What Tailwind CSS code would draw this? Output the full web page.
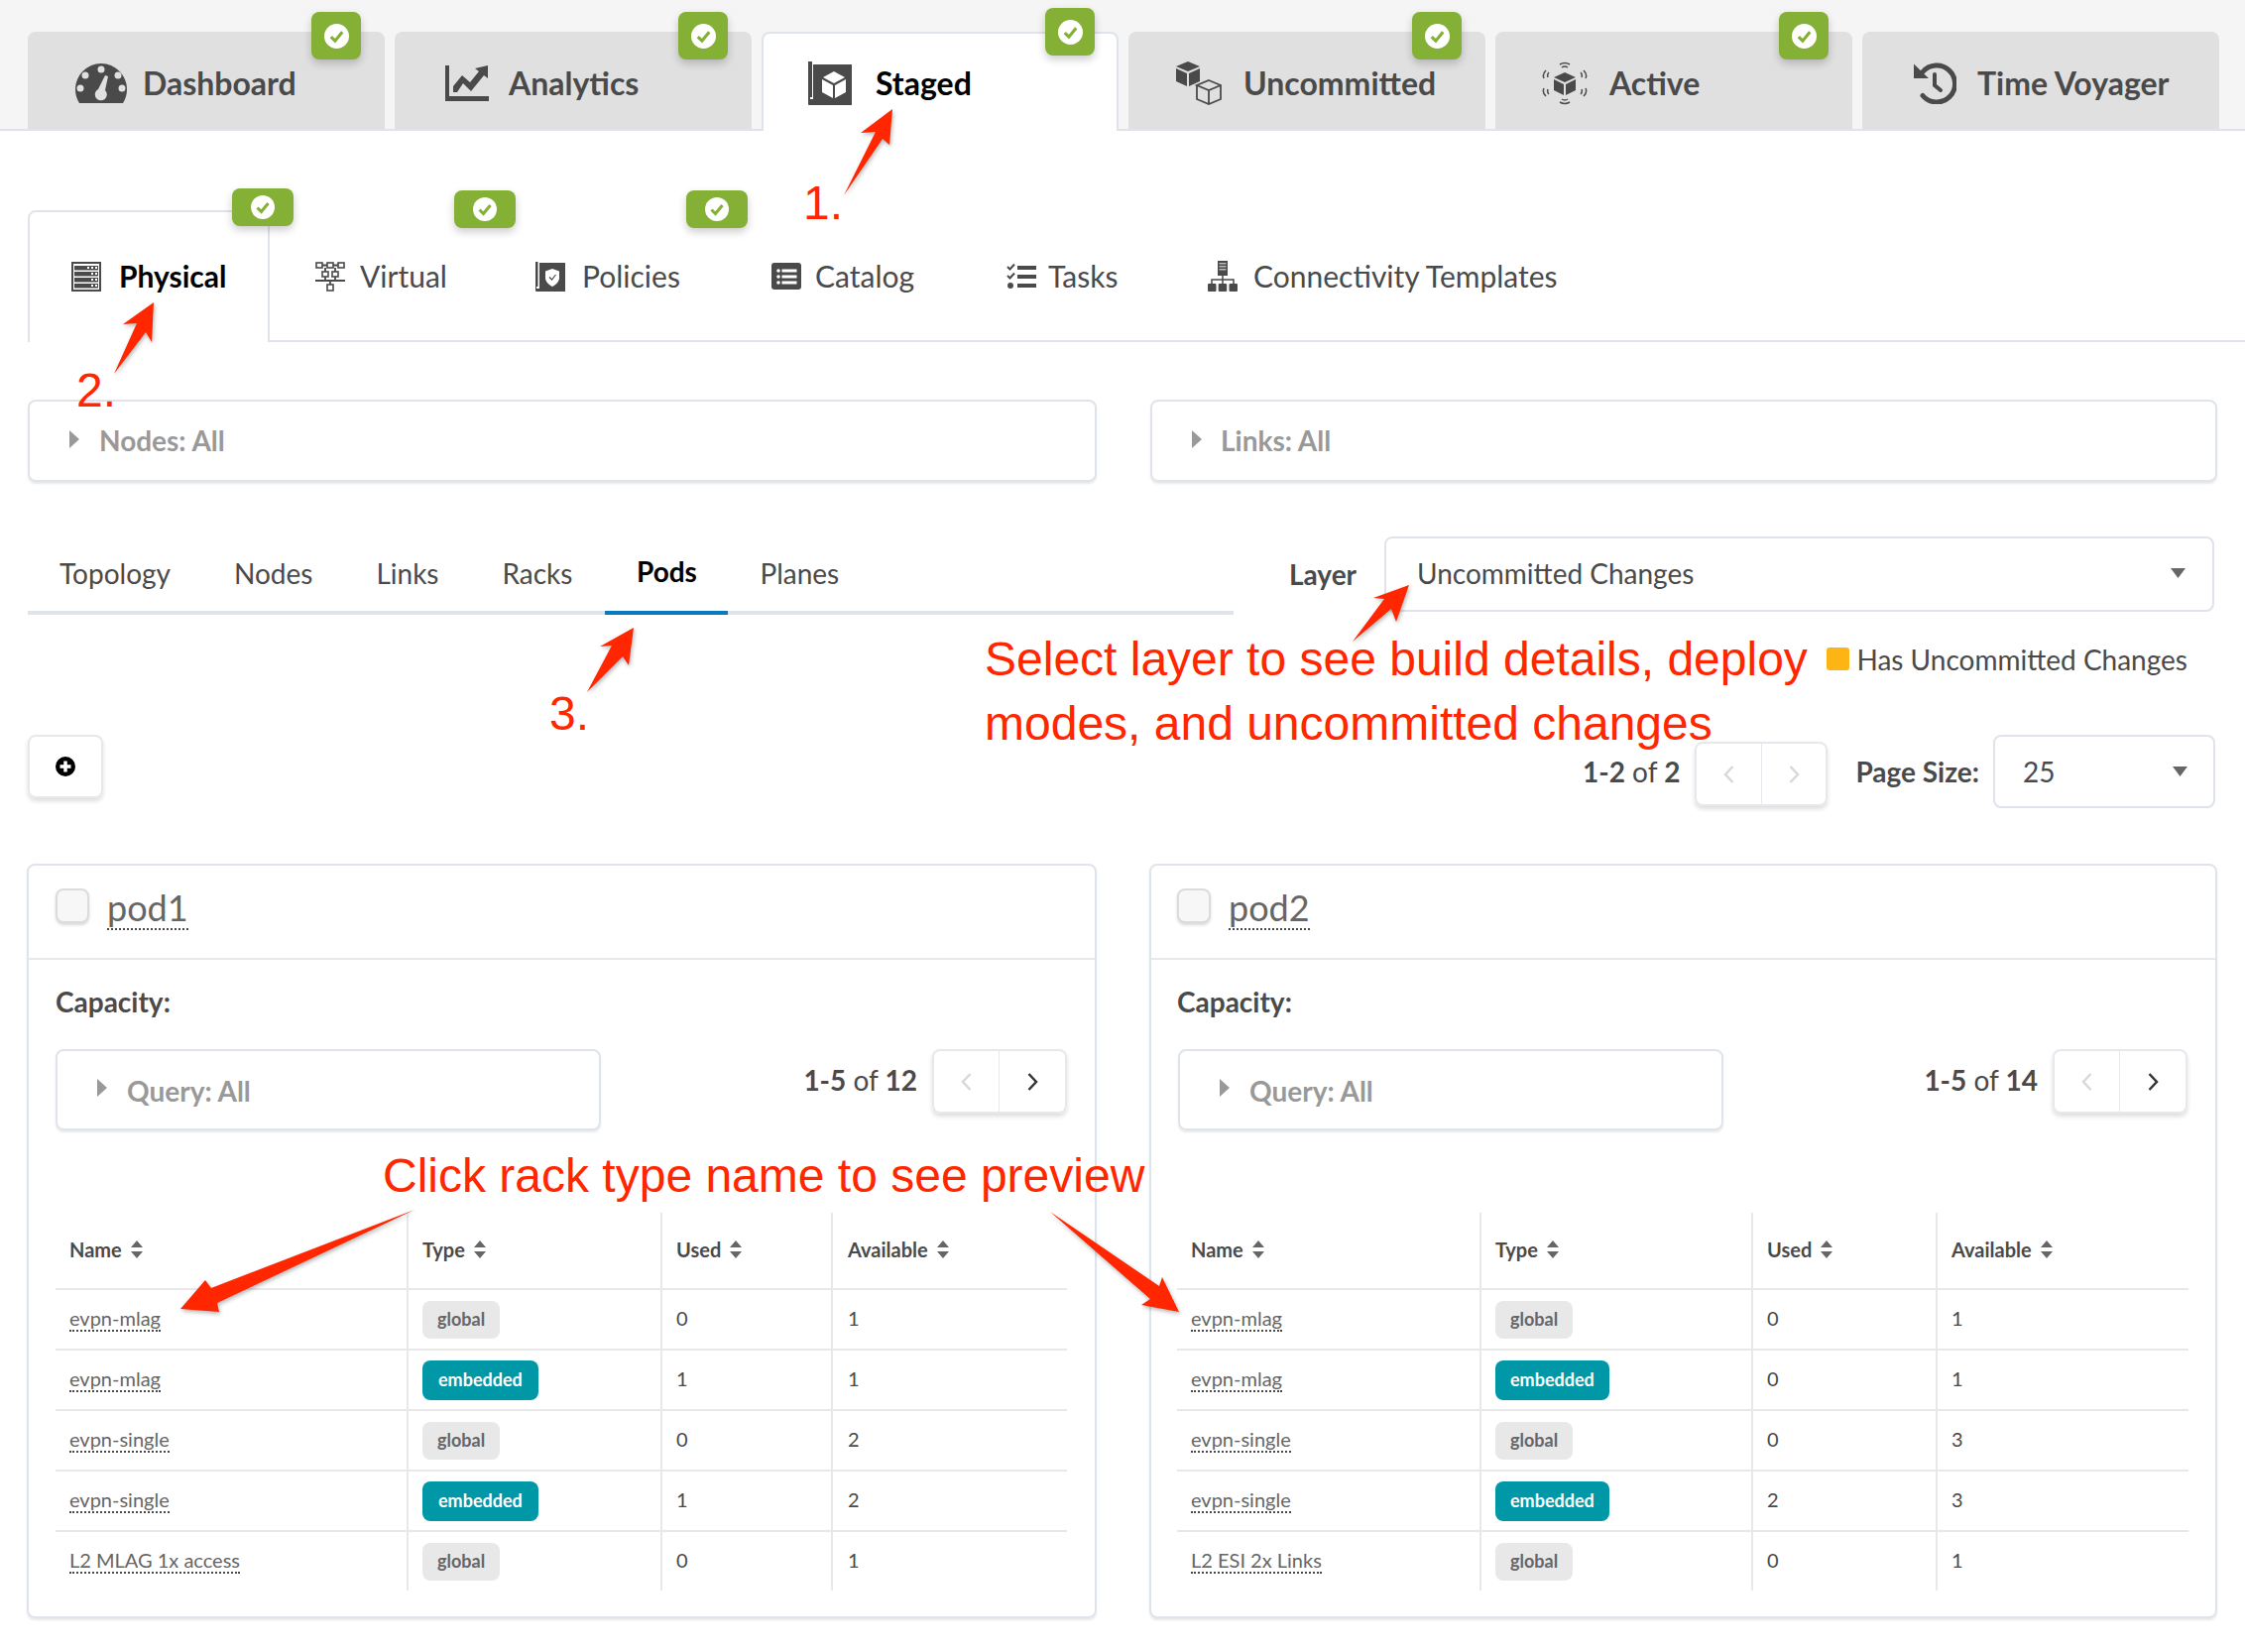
<!DOCTYPE html>
<html>
<head>
<meta charset="utf-8">
<script src="https://cdn.jsdelivr.net/npm/@tailwindcss/browser@4"></script>
</head>
<body class="relative w-[2264px] h-[1666px] overflow-hidden bg-white text-[#4a4a4a] [font-family:Lato,sans-serif]">

<!-- top nav -->
<nav class="flex h-[132px] gap-[10px] border-b-2 border-[#dfe3ea] bg-[#f5f5f5] pl-[28px] pt-[32px] text-[32px] font-bold">
  <div class="relative flex h-[98px] w-[360px] items-center gap-[16px] rounded-t-lg bg-[#e0e0e0] pt-[6px] pl-[48px]">
    <svg class="h-[40px] w-[52px]" viewBox="0 0 52 40"><path fill="#4a4a4a" d="M4 40 C1 35 0 31 0 26 C0 12 12 0 26 0 C40 0 52 12 52 26 C52 31 51 35 48 40 Z"/><g fill="#e0e0e0"><circle cx="26" cy="6" r="3.5"/><circle cx="10" cy="12" r="3.5"/><circle cx="5" cy="25" r="3.5"/><circle cx="43" cy="12" r="3.5"/><circle cx="47" cy="25" r="3.5"/><path d="M30 12 L33 13 L30 27 A6 6 0 1 1 23 26 Z"/></g></svg>
    <span>Dashboard</span>
    <span class="absolute right-[24px] top-[-20px] flex h-[48px] w-[50px] items-center justify-center rounded-lg bg-[#84b135] shadow-[0_4px_8px_rgba(0,0,0,0.2)]"><svg class="h-[25px] w-[25px]" viewBox="0 0 24 24"><circle cx="12" cy="12" r="12" fill="#fff"/><path d="M6.5 12.5 L10.5 16.5 L17.5 8" fill="none" stroke="#84b135" stroke-width="3"/></svg></span>
  </div>
  <div class="relative flex h-[98px] w-[360px] items-center gap-[20px] rounded-t-lg bg-[#e0e0e0] pt-[6px] pl-[51px]">
    <svg class="h-[36px] w-[44px]" viewBox="0 0 44 36"><path fill="#4a4a4a" d="M0 0 H4 V31 H44 V36 H0 Z"/><path fill="#4a4a4a" d="M8 27 L8 21 L17 10 L25 17 L34 6 L30 3 L43 0 L43 13 L39 10 L26 26 L18 18 L12 27 Z"/></svg>
    <span>Analytics</span>
    <span class="absolute right-[24px] top-[-20px] flex h-[48px] w-[50px] items-center justify-center rounded-lg bg-[#84b135] shadow-[0_4px_8px_rgba(0,0,0,0.2)]"><svg class="h-[25px] w-[25px]" viewBox="0 0 24 24"><circle cx="12" cy="12" r="12" fill="#fff"/><path d="M6.5 12.5 L10.5 16.5 L17.5 8" fill="none" stroke="#84b135" stroke-width="3"/></svg></span>
  </div>
  <div class="relative z-10 flex h-[100px] w-[360px] items-center gap-[24px] rounded-t-lg border-x-2 border-t-2 border-[#dfe3ea] bg-white pt-[2px] pl-[45px] text-black">
    <svg class="h-[44px] w-[44px]" viewBox="0 0 44 44"><path fill="#4a4a4a" d="M0 0 H4 V36 H2 V38 H5 V3 H43 A1 1 0 0 1 44 4 V43 A1 1 0 0 1 43 44 H1 A1 1 0 0 1 0 43 V39 H0 Z"/><path fill="#4a4a4a" d="M6 3 H44 V44 H2 V40 H6 Z"/><path fill="#fff" d="M26 10 L37 16 L26 22 L15 16 Z M14 18 L25 24 L25 37 L14 31 Z M27 24 L38 18 L38 31 L27 37 Z"/></svg>
    <span>Staged</span>
    <span class="absolute right-[22px] top-[-26px] flex h-[48px] w-[50px] items-center justify-center rounded-lg bg-[#84b135] shadow-[0_4px_8px_rgba(0,0,0,0.2)]"><svg class="h-[25px] w-[25px]" viewBox="0 0 24 24"><circle cx="12" cy="12" r="12" fill="#fff"/><path d="M6.5 12.5 L10.5 16.5 L17.5 8" fill="none" stroke="#84b135" stroke-width="3"/></svg></span>
  </div>
  <div class="relative flex h-[98px] w-[360px] items-center gap-[22px] rounded-t-lg bg-[#e0e0e0] pt-[6px] pl-[48px]">
    <svg class="h-[44px] w-[46px]" viewBox="0 0 46 44"><path fill="#4a4a4a" d="M12 0 L24 5 L12 10 L0 5 Z M0 7 L11 12 L11 25 L0 20 Z M13 12 L24 7 L24 20 L13 25 Z"/><g fill="none" stroke="#4a4a4a" stroke-width="1.8"><path d="M33 19 L45 24 L33 29 L21 24 Z M21 24 V38 L33 43 L45 38 V24 M33 29 V43"/></g></svg>
    <span>Uncommitted</span>
    <span class="absolute right-[24px] top-[-20px] flex h-[48px] w-[50px] items-center justify-center rounded-lg bg-[#84b135] shadow-[0_4px_8px_rgba(0,0,0,0.2)]"><svg class="h-[25px] w-[25px]" viewBox="0 0 24 24"><circle cx="12" cy="12" r="12" fill="#fff"/><path d="M6.5 12.5 L10.5 16.5 L17.5 8" fill="none" stroke="#84b135" stroke-width="3"/></svg></span>
  </div>
  <div class="relative flex h-[98px] w-[360px] items-center gap-[22px] rounded-t-lg bg-[#e0e0e0] pt-[6px] pl-[47px]">
    <svg class="h-[44px] w-[46px]" viewBox="0 0 46 44"><path fill="#4a4a4a" d="M23 11 L34 16 L23 21 L12 16 Z M12 18 L22 23 L22 34 L12 29 Z M24 23 L34 18 L34 29 L24 34 Z"/><g fill="none" stroke="#4a4a4a" stroke-width="1.5"><path d="M18 3 Q23 0 28 3 M20 6 Q23 4 26 6 M18 41 Q23 44 28 41 M20 38 Q23 40 26 38 M4 9 Q0 13 2 17 M7 11 Q5 13 6 16 M42 9 Q46 13 44 17 M39 11 Q41 13 40 16 M4 35 Q0 31 2 27 M7 33 Q5 31 6 28 M42 35 Q46 31 44 27 M39 33 Q41 31 40 28"/></g></svg>
    <span>Active</span>
    <span class="absolute right-[24px] top-[-20px] flex h-[48px] w-[50px] items-center justify-center rounded-lg bg-[#84b135] shadow-[0_4px_8px_rgba(0,0,0,0.2)]"><svg class="h-[25px] w-[25px]" viewBox="0 0 24 24"><circle cx="12" cy="12" r="12" fill="#fff"/><path d="M6.5 12.5 L10.5 16.5 L17.5 8" fill="none" stroke="#84b135" stroke-width="3"/></svg></span>
  </div>
  <div class="relative flex h-[98px] w-[360px] items-center gap-[21px] rounded-t-lg bg-[#e0e0e0] pt-[6px] pl-[52px]">
    <svg class="h-[42px] w-[43px]" viewBox="0 0 43 42"><path fill="none" stroke="#4a4a4a" stroke-width="5" stroke-linecap="round" d="M9 9.5 A18.5 18.5 0 1 1 9 33.5"/><path fill="#4a4a4a" d="M0 1.5 L15 16 H0 Z"/><path fill="none" stroke="#4a4a4a" stroke-width="4" stroke-linecap="round" d="M21 12 V23 L27 28"/></svg>
    <span>Time Voyager</span>
  </div>
</nav>

<!-- secondary tabs -->
<div class="mt-[80px] flex h-[133px] pl-[28px] text-[30px]">
  <div class="relative flex h-[133px] w-[244px] items-center gap-[18px] rounded-t-lg border-x-2 border-t-2 border-[#dfe3ea] pb-[2px] pl-[42px] font-bold text-black">
    <svg class="h-[30px] w-[30px]" viewBox="0 0 30 30"><rect x="1" y="1" width="28" height="28" fill="none" stroke="#4a4a4a" stroke-width="2"/><g fill="#4a4a4a"><rect x="3" y="4" width="24" height="4.5"/><rect x="3" y="10" width="24" height="4.5"/><rect x="3" y="16" width="24" height="4.5"/><rect x="3" y="22" width="24" height="4.5"/></g><g fill="#fff"><rect x="16" y="5" width="2" height="2"/><rect x="20" y="5" width="2" height="2"/><rect x="24" y="5" width="2" height="2"/><rect x="20" y="11" width="2" height="2"/><rect x="24" y="11" width="2" height="2"/><rect x="20" y="17" width="2" height="2"/><rect x="24" y="17" width="2" height="2"/><rect x="20" y="23" width="2" height="2"/><rect x="24" y="23" width="2" height="2"/></g></svg>
    <span>Physical</span>
    <span class="absolute right-[-26px] top-[-24px] flex h-[38px] w-[62px] items-center justify-center rounded-lg bg-[#84b135] shadow-[0_4px_8px_rgba(0,0,0,0.2)]"><svg class="h-[24px] w-[24px]" viewBox="0 0 24 24"><circle cx="12" cy="12" r="12" fill="#fff"/><path d="M6.5 12.5 L10.5 16.5 L17.5 8" fill="none" stroke="#84b135" stroke-width="3"/></svg></span>
  </div>
  <div class="flex flex-1 items-center border-b-2 border-[#dfe3ea] pl-[46px] pt-[2px]">
    <div class="relative flex w-[222px] items-center gap-[15px]">
      <svg class="h-[30px] w-[30px]" viewBox="0 0 30 30"><g fill="none" stroke="#4a4a4a" stroke-width="1.6"><rect x="1" y="1" width="6" height="5"/><rect x="12" y="1" width="6" height="5"/><rect x="23" y="1" width="6" height="5"/><rect x="7" y="10" width="6" height="5"/><rect x="17" y="10" width="6" height="5"/><rect x="12" y="23" width="6" height="6"/><path d="M7 3.5 H12 M18 3.5 H23 M10 6 V10 M20 6 V10 M10 15 V19 M20 15 V19 M15 19 V23 M0 19 H30" stroke-width="1.8"/></g></svg>
      <span>Virtual</span>
      <span class="absolute left-[140px] top-[-64px] flex h-[38px] w-[62px] items-center justify-center rounded-lg bg-[#84b135] shadow-[0_4px_8px_rgba(0,0,0,0.2)]"><svg class="h-[24px] w-[24px]" viewBox="0 0 24 24"><circle cx="12" cy="12" r="12" fill="#fff"/><path d="M6.5 12.5 L10.5 16.5 L17.5 8" fill="none" stroke="#84b135" stroke-width="3"/></svg></span>
    </div>
    <div class="relative flex w-[238px] items-center gap-[17px]">
      <svg class="h-[30px] w-[30px]" viewBox="0 0 30 30"><path fill="#4a4a4a" d="M0 0 H2.5 V25 H1 V27 H4 V1 H30 V30 H1 A1 1 0 0 1 0 29 Z"/><path fill="#fff" d="M17 7 L24 9.5 V16 C24 20 21 23 17 25 C13 23 10 20 10 16 V9.5 Z"/><path fill="none" stroke="#4a4a4a" stroke-width="1.2" d="M14 15.5 L16.5 18 L20.5 13"/></svg>
      <span>Policies</span>
      <span class="absolute left-[152px] top-[-64px] flex h-[38px] w-[62px] items-center justify-center rounded-lg bg-[#84b135] shadow-[0_4px_8px_rgba(0,0,0,0.2)]"><svg class="h-[24px] w-[24px]" viewBox="0 0 24 24"><circle cx="12" cy="12" r="12" fill="#fff"/><path d="M6.5 12.5 L10.5 16.5 L17.5 8" fill="none" stroke="#84b135" stroke-width="3"/></svg></span>
    </div>
    <div class="flex w-[237px] items-center gap-[14px]">
      <svg class="h-[27px] w-[30px]" viewBox="0 0 30 27"><rect width="30" height="27" rx="3" fill="#4a4a4a"/><g fill="#fff"><circle cx="7" cy="8" r="1.8"/><circle cx="7" cy="14" r="1.8"/><circle cx="7" cy="20" r="1.8"/><rect x="10.5" y="6.5" width="15" height="3"/><rect x="10.5" y="12.5" width="15" height="3"/><rect x="10.5" y="18.5" width="15" height="3"/></g></svg>
      <span>Catalog</span>
    </div>
    <div class="flex w-[203px] items-center gap-[12px]">
      <svg class="h-[26px] w-[30px]" viewBox="0 0 30 26"><g fill="#4a4a4a"><rect x="11" y="2" width="19" height="4"/><rect x="11" y="11" width="19" height="4"/><rect x="11" y="20" width="19" height="4"/><circle cx="4" cy="22" r="3"/></g><path d="M1 3 L3.5 5.5 L8 0.5 M1 12 L3.5 14.5 L8 9.5" fill="none" stroke="#4a4a4a" stroke-width="2"/></svg>
      <span>Tasks</span>
    </div>
    <div class="flex items-center gap-[16px]">
      <svg class="h-[31px] w-[30px]" viewBox="0 0 30 31"><rect x="10" y="0" width="10" height="15" fill="#4a4a4a"/><g fill="#bbb"><rect x="11.5" y="2" width="7" height="1.5"/><rect x="11.5" y="5" width="7" height="1.5"/><rect x="11.5" y="8" width="7" height="1.5"/></g><path d="M15 15 V19 M4 23 V19 H26 V23 M15 19 V23" fill="none" stroke="#4a4a4a" stroke-width="1.5"/><g fill="#4a4a4a"><rect x="0" y="23" width="8.5" height="8" rx="1"/><rect x="10.7" y="23" width="8.5" height="8" rx="1"/><rect x="21.5" y="23" width="8.5" height="8" rx="1"/></g></svg>
      <span>Connectivity Templates</span>
    </div>
  </div>
</div>

<main class="pl-[28px] pr-[28px]">
  <!-- filters -->
  <div class="mt-[58px] grid grid-cols-[1078px_1076px] gap-x-[54px] text-[28px] font-bold text-[#999]">
    <div class="flex h-[83px] items-center gap-[20px] rounded-lg border-2 border-[#dfe3ea] pl-[40px] shadow-[0_2px_2px_rgba(34,36,38,0.1)]"><svg class="mb-[4px] h-[18px] w-[10px]" viewBox="0 0 10 18"><path d="M0 0 L10 9 L0 18 Z" fill="#999"/></svg><span class="pb-[2px]">Nodes: All</span></div>
    <div class="flex h-[83px] items-center gap-[19px] rounded-lg border-2 border-[#dfe3ea] pl-[40px] shadow-[0_2px_2px_rgba(34,36,38,0.1)]"><svg class="mb-[4px] h-[18px] w-[10px]" viewBox="0 0 10 18"><path d="M0 0 L10 9 L0 18 Z" fill="#999"/></svg><span class="pb-[2px]">Links: All</span></div>
  </div>

  <!-- view tabs and layer -->
  <div class="mt-[55px] flex h-[79px] text-[28px]">
    <div class="flex h-[79px] w-[1216px] border-b-4 border-[#dfe3ea]">
      <span class="flex h-[79px] items-center pb-[5px] pl-[32px] pr-[32px]">Topology</span>
      <span class="flex h-[79px] items-center pb-[5px] pl-[32px] pr-[32px]">Nodes</span>
      <span class="flex h-[79px] items-center pb-[5px] pl-[32px] pr-[32px]">Links</span>
      <span class="flex h-[79px] items-center pb-[5px] pl-[32px] pr-[33px]">Racks</span>
      <span class="flex h-[79px] w-[124px] items-center justify-center border-b-4 border-[#0a7abf] pb-[5px] font-bold text-black">Pods</span>
      <span class="flex h-[79px] items-center pb-[5px] pl-[32px]">Planes</span>
    </div>
    <span class="ml-[56px] w-[96px] pt-[17px] font-bold">Layer</span>
    <div class="flex h-[76px] w-[837px] items-center justify-between rounded-lg border-2 border-[#dfe3ea] pb-[2px] pl-[31px] pr-[27px]"><span>Uncommitted Changes</span><svg class="h-[10px] w-[15px]" viewBox="0 0 15 10"><path d="M0 0 H15 L7.5 10 Z" fill="#666"/></svg></div>
  </div>

  <!-- legend -->
  <div class="mt-[33px] flex h-[23px] items-center justify-end gap-[7px] pr-[30px] text-[28px]"><span class="h-[23px] w-[23px] rounded-[3px] bg-[#fdb515]"></span><span>Has Uncommitted Changes</span></div>

  <!-- controls -->
  <div class="mt-[61px] flex h-[78px] justify-between text-[28px]">
    <button class="mt-[4px] flex h-[64px] w-[76px] items-center justify-center rounded-lg border-2 border-[#e6e8ee] shadow-[0_3px_4px_rgba(34,36,38,0.15)]"><svg class="h-[20px] w-[20px]" viewBox="0 0 20 20"><circle cx="10" cy="10" r="10" fill="#000"/><path d="M10 4.5 V15.5 M4.5 10 H15.5" stroke="#fff" stroke-width="3.5"/></svg></button>
    <div class="mr-[2px] flex items-start">
      <span class="pt-[20px]"><b>1-2</b> of <b>2</b></span>
      <div class="ml-[15px] mt-[11px] flex h-[65px] w-[134px] rounded-lg border-2 border-[#e6e8ee] shadow-[0_3px_4px_rgba(34,36,38,0.15)]">
        <span class="flex w-[66px] items-center justify-center border-r border-[#e6e8ee]"><svg class="h-[18px] w-[11px]" viewBox="0 0 11 18"><path d="M9.5 1 L2 9 L9.5 17" fill="none" stroke="#d8d8d8" stroke-width="2.5"/></svg></span>
        <span class="flex flex-1 items-center justify-center"><svg class="h-[18px] w-[11px]" viewBox="0 0 11 18"><path d="M1.5 1 L9 9 L1.5 17" fill="none" stroke="#d8d8d8" stroke-width="2.5"/></svg></span>
      </div>
      <b class="ml-[28px] pt-[20px]">Page Size:</b>
      <div class="ml-[14px] mt-[4px] flex h-[74px] w-[224px] items-center justify-between rounded-lg border-2 border-[#dfe3ea] pl-[28px] pr-[26px]"><span>25</span><svg class="h-[10px] w-[15px]" viewBox="0 0 15 10"><path d="M0 0 H15 L7.5 10 Z" fill="#666"/></svg></div>
    </div>
  </div>

  <!-- cards -->
  <div class="-ml-px mt-[56px] grid grid-cols-[1079px_1077px] gap-x-[53px]">
    <section class="h-[761px] rounded-lg border-2 border-[#dfe3ea] shadow-[0_2px_2px_rgba(34,36,38,0.1)]">
      <header class="flex h-[95px] items-center gap-[18px] border-b-2 border-[#e6e8ee] pb-[7px] pl-[27px]">
        <span class="mb-[6px] h-[35px] w-[34px] rounded-lg border-2 border-[#dcdcdc] bg-[#f7f7f7] shadow-[0_2px_3px_rgba(0,0,0,0.15)]"></span>
        <span class="border-b-2 border-dotted border-[#4a4a4a] text-[36px] leading-[42px] text-[#666]">pod1</span>
      </header>
      <div class="pl-[27px] pr-[28px]">
        <p class="mt-[25px] text-[28px] font-bold leading-[34px]">Capacity:</p>
        <div class="mt-[31px] flex justify-between">
          <div class="flex h-[82px] w-[550px] items-center gap-[20px] rounded-lg border-2 border-[#dfe3ea] pl-[40px] pt-[2px] text-[28px] font-bold text-[#999] shadow-[0_2px_2px_rgba(34,36,38,0.1)]"><svg class="mb-[6px] h-[18px] w-[10px]" viewBox="0 0 10 18"><path d="M0 0 L10 9 L0 18 Z" fill="#999"/></svg><span>Query: All</span></div>
          <div class="flex h-[65px] items-center text-[28px]">
            <span class="pb-[4px]"><b>1-5</b> of <b>12</b></span>
            <div class="ml-[15px] flex h-[65px] w-[136px] rounded-lg border-2 border-[#e6e8ee] shadow-[0_3px_4px_rgba(34,36,38,0.15)]">
              <span class="flex w-[66px] items-center justify-center border-r border-[#e6e8ee]"><svg class="h-[18px] w-[11px]" viewBox="0 0 11 18"><path d="M9.5 1 L2 9 L9.5 17" fill="none" stroke="#d8d8d8" stroke-width="2.5"/></svg></span>
              <span class="flex flex-1 items-center justify-center"><svg class="h-[18px] w-[11px]" viewBox="0 0 11 18"><path d="M1.5 1 L9 9 L1.5 17" fill="none" stroke="#333" stroke-width="2.5"/></svg></span>
            </div>
          </div>
        </div>
        <table class="mt-[83px] w-[1020px] table-fixed border-collapse text-[20px] [&_td]:pb-[4px] [&_td:nth-child(2)]:pb-0 [&_th]:pb-[2px]">
          <colgroup><col class="w-[355px]"><col class="w-[256px]"><col class="w-[172px]"><col class="w-[237px]"></colgroup>
          <thead><tr class="h-[77px] border-b-2 border-[#e8e8e8] text-left font-bold">
            <th class="border-r-2 border-[#e8e8e8] pl-[14px] font-bold"><span class="flex items-center gap-[9px]">Name<svg class="h-[18px] w-[12px]" viewBox="0 0 12 18"><path d="M6 0 L12 7 H0 Z M6 18 L12 11 H0 Z" fill="#666"/></svg></span></th>
            <th class="border-r-2 border-[#e8e8e8] pl-[14px] font-bold"><span class="flex items-center gap-[9px]">Type<svg class="h-[18px] w-[12px]" viewBox="0 0 12 18"><path d="M6 0 L12 7 H0 Z M6 18 L12 11 H0 Z" fill="#666"/></svg></span></th>
            <th class="border-r-2 border-[#e8e8e8] pl-[14px] font-bold"><span class="flex items-center gap-[9px]">Used<svg class="h-[18px] w-[12px]" viewBox="0 0 12 18"><path d="M6 0 L12 7 H0 Z M6 18 L12 11 H0 Z" fill="#666"/></svg></span></th>
            <th class="pl-[15px] font-bold"><span class="flex items-center gap-[9px]">Available<svg class="h-[18px] w-[12px]" viewBox="0 0 12 18"><path d="M6 0 L12 7 H0 Z M6 18 L12 11 H0 Z" fill="#666"/></svg></span></th>
          </tr></thead>
          <tbody>
            <tr class="h-[61px] border-b-2 border-[#e8e8e8]"><td class="border-r-2 border-[#e8e8e8] pl-[14px]"><span class="border-b-2 border-dotted border-[#4a4a4a] text-[#666]">evpn-mlag</span></td><td class="border-r-2 border-[#e8e8e8] pl-[14px]"><span class="inline-flex h-[38px] items-center rounded-lg bg-[#e8e8e8] px-[15px] text-[18px] font-bold text-[#666]">global</span></td><td class="border-r-2 border-[#e8e8e8] pl-[14px]">0</td><td class="pl-[15px]">1</td></tr>
            <tr class="h-[61px] border-b-2 border-[#e8e8e8]"><td class="border-r-2 border-[#e8e8e8] pl-[14px]"><span class="border-b-2 border-dotted border-[#4a4a4a] text-[#666]">evpn-mlag</span></td><td class="border-r-2 border-[#e8e8e8] pl-[14px]"><span class="inline-flex h-[40px] items-center rounded-lg bg-[#0097a7] px-[16px] text-[18px] font-bold text-white">embedded</span></td><td class="border-r-2 border-[#e8e8e8] pl-[14px]">1</td><td class="pl-[15px]">1</td></tr>
            <tr class="h-[61px] border-b-2 border-[#e8e8e8]"><td class="border-r-2 border-[#e8e8e8] pl-[14px]"><span class="border-b-2 border-dotted border-[#4a4a4a] text-[#666]">evpn-single</span></td><td class="border-r-2 border-[#e8e8e8] pl-[14px]"><span class="inline-flex h-[38px] items-center rounded-lg bg-[#e8e8e8] px-[15px] text-[18px] font-bold text-[#666]">global</span></td><td class="border-r-2 border-[#e8e8e8] pl-[14px]">0</td><td class="pl-[15px]">2</td></tr>
            <tr class="h-[61px] border-b-2 border-[#e8e8e8]"><td class="border-r-2 border-[#e8e8e8] pl-[14px]"><span class="border-b-2 border-dotted border-[#4a4a4a] text-[#666]">evpn-single</span></td><td class="border-r-2 border-[#e8e8e8] pl-[14px]"><span class="inline-flex h-[40px] items-center rounded-lg bg-[#0097a7] px-[16px] text-[18px] font-bold text-white">embedded</span></td><td class="border-r-2 border-[#e8e8e8] pl-[14px]">1</td><td class="pl-[15px]">2</td></tr>
            <tr class="h-[60px]"><td class="border-r-2 border-[#e8e8e8] pl-[14px]"><span class="border-b-2 border-dotted border-[#4a4a4a] text-[#666]">L2 MLAG 1x access</span></td><td class="border-r-2 border-[#e8e8e8] pl-[14px]"><span class="inline-flex h-[38px] items-center rounded-lg bg-[#e8e8e8] px-[15px] text-[18px] font-bold text-[#666]">global</span></td><td class="border-r-2 border-[#e8e8e8] pl-[14px]">0</td><td class="pl-[15px]">1</td></tr>
          </tbody>
        </table>
      </div>
    </section>

    <section class="h-[761px] rounded-lg border-2 border-[#dfe3ea] shadow-[0_2px_2px_rgba(34,36,38,0.1)]">
      <header class="flex h-[95px] items-center gap-[18px] border-b-2 border-[#e6e8ee] pb-[7px] pl-[26px]">
        <span class="mb-[6px] h-[35px] w-[34px] rounded-lg border-2 border-[#dcdcdc] bg-[#f7f7f7] shadow-[0_2px_3px_rgba(0,0,0,0.15)]"></span>
        <span class="border-b-2 border-dotted border-[#4a4a4a] text-[36px] leading-[42px] text-[#666]">pod2</span>
      </header>
      <div class="pl-[26px] pr-[28px]">
        <p class="mt-[25px] text-[28px] font-bold leading-[34px]">Capacity:</p>
        <div class="mt-[31px] flex justify-between">
          <div class="ml-px flex h-[82px] w-[550px] items-center gap-[20px] rounded-lg border-2 border-[#dfe3ea] pl-[40px] pt-[2px] text-[28px] font-bold text-[#999] shadow-[0_2px_2px_rgba(34,36,38,0.1)]"><svg class="mb-[6px] h-[18px] w-[10px]" viewBox="0 0 10 18"><path d="M0 0 L10 9 L0 18 Z" fill="#999"/></svg><span>Query: All</span></div>
          <div class="flex h-[65px] items-center text-[28px]">
            <span class="pb-[4px]"><b>1-5</b> of <b>14</b></span>
            <div class="ml-[15px] flex h-[65px] w-[136px] rounded-lg border-2 border-[#e6e8ee] shadow-[0_3px_4px_rgba(34,36,38,0.15)]">
              <span class="flex w-[66px] items-center justify-center border-r border-[#e6e8ee]"><svg class="h-[18px] w-[11px]" viewBox="0 0 11 18"><path d="M9.5 1 L2 9 L9.5 17" fill="none" stroke="#d8d8d8" stroke-width="2.5"/></svg></span>
              <span class="flex flex-1 items-center justify-center"><svg class="h-[18px] w-[11px]" viewBox="0 0 11 18"><path d="M1.5 1 L9 9 L1.5 17" fill="none" stroke="#333" stroke-width="2.5"/></svg></span>
            </div>
          </div>
        </div>
        <table class="mt-[83px] w-[1020px] table-fixed border-collapse text-[20px] [&_td]:pb-[4px] [&_td:nth-child(2)]:pb-0 [&_th]:pb-[2px]">
          <colgroup><col class="w-[306px]"><col class="w-[274px]"><col class="w-[186px]"><col class="w-[254px]"></colgroup>
          <thead><tr class="h-[77px] border-b-2 border-[#e8e8e8] text-left font-bold">
            <th class="border-r-2 border-[#e8e8e8] pl-[14px] font-bold"><span class="flex items-center gap-[9px]">Name<svg class="h-[18px] w-[12px]" viewBox="0 0 12 18"><path d="M6 0 L12 7 H0 Z M6 18 L12 11 H0 Z" fill="#666"/></svg></span></th>
            <th class="border-r-2 border-[#e8e8e8] pl-[14px] font-bold"><span class="flex items-center gap-[9px]">Type<svg class="h-[18px] w-[12px]" viewBox="0 0 12 18"><path d="M6 0 L12 7 H0 Z M6 18 L12 11 H0 Z" fill="#666"/></svg></span></th>
            <th class="border-r-2 border-[#e8e8e8] pl-[14px] font-bold"><span class="flex items-center gap-[9px]">Used<svg class="h-[18px] w-[12px]" viewBox="0 0 12 18"><path d="M6 0 L12 7 H0 Z M6 18 L12 11 H0 Z" fill="#666"/></svg></span></th>
            <th class="pl-[14px] font-bold"><span class="flex items-center gap-[9px]">Available<svg class="h-[18px] w-[12px]" viewBox="0 0 12 18"><path d="M6 0 L12 7 H0 Z M6 18 L12 11 H0 Z" fill="#666"/></svg></span></th>
          </tr></thead>
          <tbody>
            <tr class="h-[61px] border-b-2 border-[#e8e8e8]"><td class="border-r-2 border-[#e8e8e8] pl-[14px]"><span class="border-b-2 border-dotted border-[#4a4a4a] text-[#666]">evpn-mlag</span></td><td class="border-r-2 border-[#e8e8e8] pl-[14px]"><span class="inline-flex h-[38px] items-center rounded-lg bg-[#e8e8e8] px-[15px] text-[18px] font-bold text-[#666]">global</span></td><td class="border-r-2 border-[#e8e8e8] pl-[14px]">0</td><td class="pl-[14px]">1</td></tr>
            <tr class="h-[61px] border-b-2 border-[#e8e8e8]"><td class="border-r-2 border-[#e8e8e8] pl-[14px]"><span class="border-b-2 border-dotted border-[#4a4a4a] text-[#666]">evpn-mlag</span></td><td class="border-r-2 border-[#e8e8e8] pl-[14px]"><span class="inline-flex h-[40px] items-center rounded-lg bg-[#0097a7] px-[15px] text-[18px] font-bold text-white">embedded</span></td><td class="border-r-2 border-[#e8e8e8] pl-[14px]">0</td><td class="pl-[14px]">1</td></tr>
            <tr class="h-[61px] border-b-2 border-[#e8e8e8]"><td class="border-r-2 border-[#e8e8e8] pl-[14px]"><span class="border-b-2 border-dotted border-[#4a4a4a] text-[#666]">evpn-single</span></td><td class="border-r-2 border-[#e8e8e8] pl-[14px]"><span class="inline-flex h-[38px] items-center rounded-lg bg-[#e8e8e8] px-[15px] text-[18px] font-bold text-[#666]">global</span></td><td class="border-r-2 border-[#e8e8e8] pl-[14px]">0</td><td class="pl-[14px]">3</td></tr>
            <tr class="h-[61px] border-b-2 border-[#e8e8e8]"><td class="border-r-2 border-[#e8e8e8] pl-[14px]"><span class="border-b-2 border-dotted border-[#4a4a4a] text-[#666]">evpn-single</span></td><td class="border-r-2 border-[#e8e8e8] pl-[14px]"><span class="inline-flex h-[40px] items-center rounded-lg bg-[#0097a7] px-[15px] text-[18px] font-bold text-white">embedded</span></td><td class="border-r-2 border-[#e8e8e8] pl-[14px]">2</td><td class="pl-[14px]">3</td></tr>
            <tr class="h-[60px]"><td class="border-r-2 border-[#e8e8e8] pl-[14px]"><span class="border-b-2 border-dotted border-[#4a4a4a] text-[#666]">L2 ESI 2x Links</span></td><td class="border-r-2 border-[#e8e8e8] pl-[14px]"><span class="inline-flex h-[38px] items-center rounded-lg bg-[#e8e8e8] px-[15px] text-[18px] font-bold text-[#666]">global</span></td><td class="border-r-2 border-[#e8e8e8] pl-[14px]">0</td><td class="pl-[14px]">1</td></tr>
          </tbody>
        </table>
      </div>
    </section>
  </div>
</main>

<!-- red annotations laid over the screenshot -->
<svg class="pointer-events-none absolute left-0 top-0 z-20 h-[1666px] w-[2264px] drop-shadow-[1px_2px_2px_rgba(0,0,0,0.3)]" viewBox="0 0 2264 1666">
  <g fill="#ff2600">
    <path d="M851 197 L883 133 L868 134 L900 110 L897 146 L890 140 Z"/>
    <path d="M115 377 L138 326 L124 327 L155 305 L153 345 L147 335 Z"/>
    <path d="M592 698 L617 651 L605 652 L639 633 L634 671 L628 662 Z"/>
    <path d="M1364 647 L1396 604 L1385 603 L1421 590 L1408 627 L1403 614 Z"/>
    <path d="M418 1220 L213 1299 L207 1291 L182 1320 L221 1323 L219 1314 Z"/>
    <path d="M1059 1222 L1169 1297 L1172 1288 L1189 1323 L1151 1316 L1160 1310 Z"/>
  </g>
</svg>
<span class="absolute left-[810px] top-[177px] z-20 text-[48px] leading-[56px] text-[#ff2600] [font-family:'Liberation_Sans',sans-serif]">1.</span>
<span class="absolute left-[77px] top-[366px] z-20 text-[48px] leading-[56px] text-[#ff2600] [font-family:'Liberation_Sans',sans-serif]">2.</span>
<span class="absolute left-[554px] top-[692px] z-20 text-[48px] leading-[56px] text-[#ff2600] [font-family:'Liberation_Sans',sans-serif]">3.</span>
<p class="absolute left-[993px] top-[632px] z-20 whitespace-nowrap text-[48px] leading-[65px] text-[#ff2600] [font-family:'Liberation_Sans',sans-serif]">Select layer to see build details, deploy<br>modes, and uncommitted changes</p>
<span class="absolute left-[386px] top-[1158px] z-20 text-[48px] leading-[56px] text-[#ff2600] [font-family:'Liberation_Sans',sans-serif]">Click rack type name to see preview</span>
</body>
</html>
